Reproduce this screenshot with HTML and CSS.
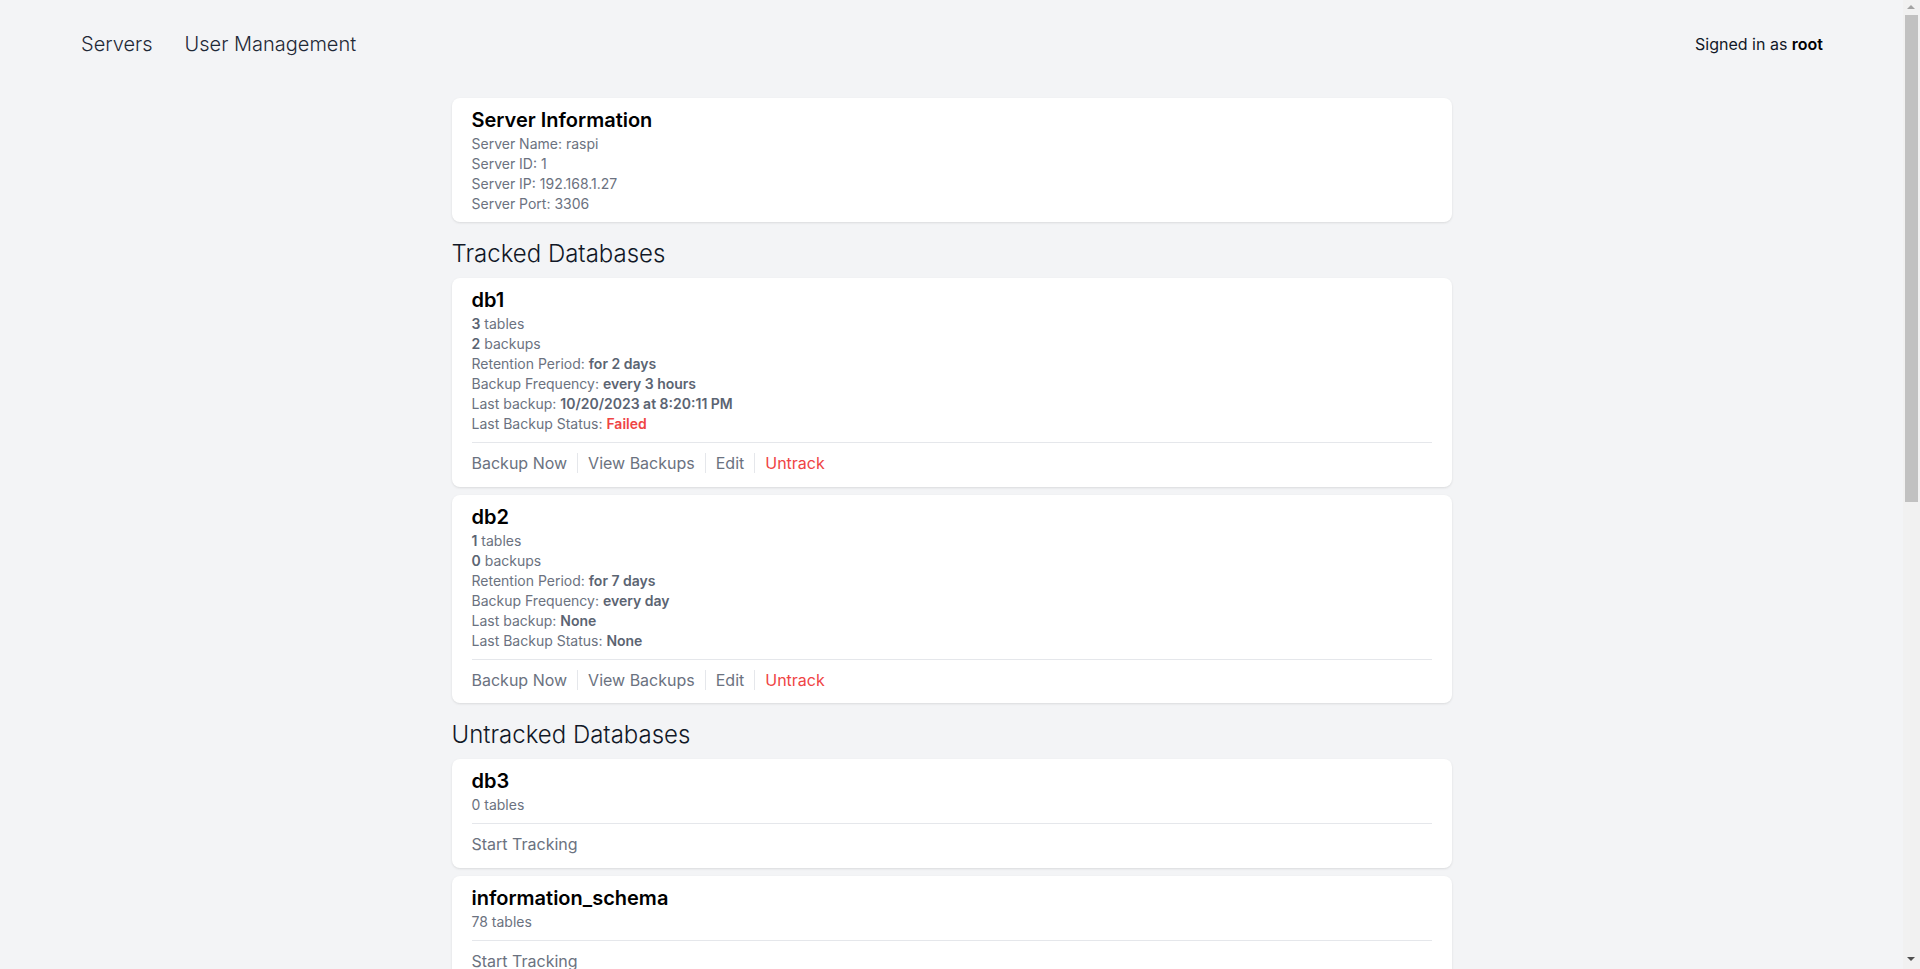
FILE: index.html
```html
<!DOCTYPE html>
<html lang="en">
<head>
<meta charset="utf-8">
<title>Server</title>
<link rel="stylesheet" href="styles.css">
</head>
<body>
<header class="topbar">
  <nav class="nav">
    <a class="nav-link" href="#">Servers</a>
    <a class="nav-link" href="#">User Management</a>
  </nav>
  <div class="signed">Signed in as <b>root</b></div>
</header>
<main class="container">
  <section class="card">
    <h2 class="card-title">Server Information</h2>
    <p class="info">Server Name: raspi</p>
    <p class="info">Server ID: 1</p>
    <p class="info">Server IP: 192.168.1.27</p>
    <p class="info">Server Port: 3306</p>
  </section>

  <h1 class="section-title">Tracked Databases</h1>
  <div class="list">
    <section class="card">
      <h2 class="card-title">db1</h2>
      <p class="info"><b>3</b> tables</p>
      <p class="info"><b>2</b> backups</p>
      <p class="info">Retention Period: <b>for 2 days</b></p>
      <p class="info">Backup Frequency: <b>every 3 hours</b></p>
      <p class="info">Last backup: <b>10/20/2023 at 8:20:11 PM</b></p>
      <p class="info">Last Backup Status: <b class="failed">Failed</b></p>
      <div class="actions">
        <a class="action" href="#">Backup Now</a>
        <a class="action" href="#">View Backups</a>
        <a class="action" href="#">Edit</a>
        <a class="action danger" href="#">Untrack</a>
      </div>
    </section>
    <section class="card">
      <h2 class="card-title">db2</h2>
      <p class="info"><b>1</b> tables</p>
      <p class="info"><b>0</b> backups</p>
      <p class="info">Retention Period: <b>for 7 days</b></p>
      <p class="info">Backup Frequency: <b>every day</b></p>
      <p class="info">Last backup: <b>None</b></p>
      <p class="info">Last Backup Status: <b>None</b></p>
      <div class="actions">
        <a class="action" href="#">Backup Now</a>
        <a class="action" href="#">View Backups</a>
        <a class="action" href="#">Edit</a>
        <a class="action danger" href="#">Untrack</a>
      </div>
    </section>
  </div>

  <h1 class="section-title">Untracked Databases</h1>
  <div class="list">
    <section class="card">
      <h2 class="card-title">db3</h2>
      <p class="info">0 tables</p>
      <div class="actions"><a class="action" href="#">Start Tracking</a></div>
    </section>
    <section class="card">
      <h2 class="card-title">information_schema</h2>
      <p class="info">78 tables</p>
      <div class="actions"><a class="action" href="#">Start Tracking</a></div>
    </section>
    <section class="card">
      <h2 class="card-title">mysql</h2>
      <p class="info">38 tables</p>
      <div class="actions"><a class="action" href="#">Start Tracking</a></div>
    </section>
    <section class="card">
      <h2 class="card-title">performance_schema</h2>
      <p class="info">111 tables</p>
      <div class="actions"><a class="action" href="#">Start Tracking</a></div>
    </section>
    <section class="card">
      <h2 class="card-title">sys</h2>
      <p class="info">101 tables</p>
      <div class="actions"><a class="action" href="#">Start Tracking</a></div>
    </section>
  </div>
</main>
<div class="scrollbar" aria-hidden="true">
  <span class="sb-arrow sb-up"></span>
  <span class="sb-thumb"></span>
  <span class="sb-arrow sb-down"></span>
</div>
</body>
</html>
```

FILE: styles.css
```css
* { box-sizing: border-box; }
html, body {
  margin: 0;
  padding: 0;
}
body {
  background: #f3f4f6;
  font-family: Inter, "Noto Sans", "Liberation Sans", sans-serif;
  color: #111827;
  padding-right: 17px;
}
a { text-decoration: none; color: inherit; }
p, h1, h2 { margin: 0; }

.topbar {
  height: 88px;
  padding: 0 80px 0 81px;
  display: flex;
  align-items: center;
  justify-content: space-between;
}
.nav {
  display: flex;
  gap: 32px;
}
.nav-link {
  font-size: 20px;
  line-height: 28px;
  font-weight: 300;
  color: #1f2937;
}
.signed {
  font-size: 16px;
  line-height: 24px;
  color: #111827;
}
.signed b { font-weight: 600; color: #000; }

.container {
  width: 1000px;
  margin: 0 auto;
  padding: 10px 0 880px;
}

.card {
  background: #fff;
  border-radius: 8px;
  padding: 8px 20px;
  box-shadow: 0 1px 3px rgba(0,0,0,0.07), 0 1px 2px rgba(0,0,0,0.04);
}
.card-title {
  font-size: 20px;
  line-height: 28px;
  font-weight: 600;
  color: #000;
}
.info {
  font-size: 14px;
  line-height: 20px;
  color: #6b7280;
}
.info b {
  font-weight: 600;
  color: #5b6472;
}
.info b.failed { color: #ef4444; }

.section-title {
  margin: 16px 0 8px;
  font-size: 24px;
  line-height: 32px;
  font-weight: 300;
  color: #111827;
}

.list {
  display: flex;
  flex-direction: column;
  gap: 8px;
}

.actions {
  margin: 8px 0 -8px;
  border-top: 1px solid #e5e7eb;
  padding: 10px 0 13.5px;
  display: flex;
}
.action {
  font-size: 16px;
  line-height: 20px;
  color: #6b7280;
  padding: 0 10px;
  border-left: 1px solid #e5e7eb;
}
.action:first-child {
  padding-left: 0;
  border-left: none;
}
.action.danger { color: #ef4444; }

.scrollbar {
  position: fixed;
  top: 0;
  right: 0;
  width: 17px;
  height: 100%;
  background: #f1f1f1;
}
.sb-thumb {
  position: absolute;
  top: 15px;
  left: 2px;
  width: 13px;
  height: 487px;
  background: #c1c1c1;
}
.sb-arrow {
  position: absolute;
  left: 4px;
  width: 0;
  height: 0;
  border-left: 4.5px solid transparent;
  border-right: 4.5px solid transparent;
}
.sb-up {
  top: 5px;
  border-bottom: 4.5px solid #a3a3a3;
}
.sb-down {
  bottom: 8px;
  border-top: 4.5px solid #505050;
}
```
